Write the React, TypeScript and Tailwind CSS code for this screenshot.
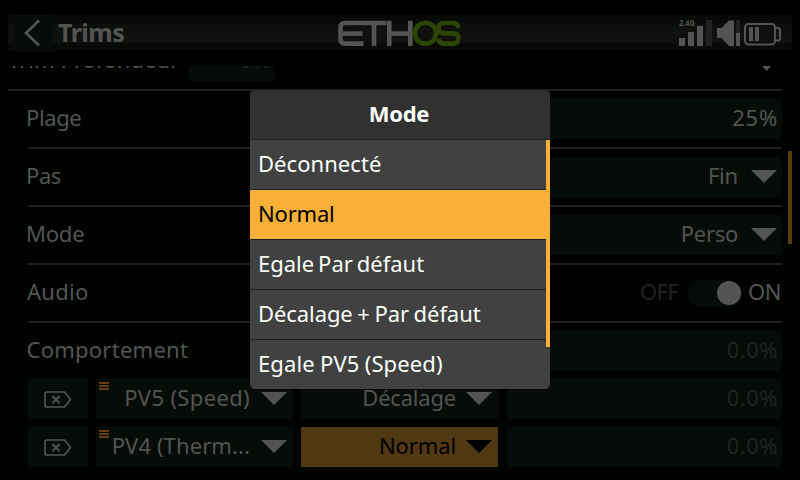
import React from "react";

const Caret = ({ dark = false }: { dark?: boolean }) => (
  <svg className={"-mt-px block " + (dark ? "text-black" : "text-[#525552]")} width="26" height="13" viewBox="0 0 26 13">
    <path d="M0 0H26L13 13Z" fill="currentColor" />
  </svg>
);

const BackIcon = () => (
  <svg width="38" height="38" viewBox="0 0 38 38" fill="none">
    <path d="M25 6.5L12 19L25 31.5" stroke="#525552" strokeWidth="2.6" />
  </svg>
);

const Logo = () => (
  <svg width="124" height="28" viewBox="338 19 124 28" fill="none">
    <g stroke="#535553" strokeWidth="4.6">
      <path d="M386.5 23H345Q340.500 23 340.500 27.500V39Q340.500 43.600 345 43.600H363.500" />
      <path d="M340 33.600H362.500" />
      <path d="M374 23V46" />
      <path d="M389.300 20.700V46" />
      <path d="M410.300 20.700V46" />
      <path d="M389 33.600H410" />
    </g>
    <g stroke="#2c4500" strokeWidth="4.600">
      <rect x="415.200" y="23" width="20.600" height="20.600" rx="9.500" />
      <path d="M458.300 28Q457.800 23 453 23H443.500Q438.600 23 438.600 28.300Q438.600 33.400 443.500 33.400H453Q458.300 33.400 458.300 38.500Q458.300 43.600 453 43.600H443.500Q439 43.600 438.600 38.500" />
    </g>
  </svg>
);

const StatusIcons = () => (
  <svg className="mt-[2px]" width="104" height="32" viewBox="678 18 104 32">
    <g fill="#525552">
      <text x="679" y="26.300" fontSize="8" fontWeight="700" fontFamily="Noto Sans, sans-serif" textLength="16" lengthAdjust="spacingAndGlyphs">2.4G</text>
      <rect x="679" y="38" width="6" height="8" />
      <rect x="688" y="32" width="6" height="14" />
      <rect x="697" y="26" width="6" height="20" />
      <path d="M717 28H721.500L729 20.500H734V46H729L721.500 38H717Z" />
      <rect x="736" y="33" width="4" height="13" />
      <rect x="749" y="27" width="4" height="14" />
      <rect x="755" y="27" width="4" height="14" />
    </g>
    <g fill="#1f221f">
      <rect x="706" y="20" width="6" height="26" />
      <rect x="736" y="20" width="4" height="13" />
    </g>
    <g fill="none" stroke="#525552" strokeWidth="2">
      <rect x="745" y="24" width="30" height="20.500" rx="3.500" />
      <path d="M775 28H778Q780 28 780 30V38.500Q780 40.500 778 40.500H775" />
    </g>
  </svg>
);

const DeleteTag = () => (
  <svg width="28" height="17" viewBox="0 0 28 17" fill="none" stroke="#525552">
    <path d="M3 1H20.500L26.500 8.500L20.500 16H3Q1 16 1 14V3Q1 1 3 1Z" strokeWidth="1.700" />
    <path d="M8.500 5L15.500 12M15.500 5L8.500 12" strokeWidth="1.900" />
  </svg>
);

const MenuMark = () => (
  <div className="absolute left-[3px] top-[3px] flex flex-col gap-px">
    <div className="h-[2px] w-[10px] bg-[#603f0c]" />
    <div className="h-[2px] w-[10px] bg-[#603f0c]" />
    <div className="h-[2px] w-[10px] bg-[#603f0c]" />
  </div>
);

const Field = ({ className = "", children }: { className?: string; children?: React.ReactNode }) => (
  <div className={"relative flex h-10 items-center justify-end bg-[#080c08] " + className}>{children}</div>
);

const Label = ({ className = "", children }: { className?: string; children: React.ReactNode }) => (
  <span className={"block pb-[5px] " + className}>{children}</span>
);

const Row = ({ label, tracking = "", last = false, children }: { label: string; tracking?: string; last?: boolean; children: React.ReactNode }) => (
  <div className={"ml-[28px] flex items-center justify-between border-[#1d201d] " + (last ? "h-[56px]" : "h-[58px] border-b-2")}>
    <Label className={"-ml-[2px] " + tracking}>{label}</Label>
    {children}
  </div>
);

const Assignment = ({ source, sourceTracking, mode, modeTracking, active = false }: { source: string; sourceTracking: string; mode: string; modeTracking: string; active?: boolean }) => (
  <div className="ml-[28px] flex gap-2">
    <div className="flex h-10 w-[60px] items-center justify-center bg-[#080c08]"><DeleteTag /></div>
    <Field className="w-[197px] gap-[11px] pr-[6px]">
      <MenuMark />
      <Label className={sourceTracking}>{source}</Label>
      <Caret />
    </Field>
    <Field className={"w-[197px] gap-[10px] pr-[6px] " + (active ? "!bg-[#503812] text-black" : "")}>
      <Label className={modeTracking}>{mode}</Label>
      <Caret dark={active} />
    </Field>
    <Field className="flex-1 pr-[4px] text-[#202320]"><Label className="tracking-[0.5px]">0.0%</Label></Field>
  </div>
);

const options = [
  { label: "Déconnecté", style: "tracking-[0.05px]" },
  { label: "Normal", style: "tracking-[-0.2px]" },
  { label: "Egale Par défaut", style: "tracking-[0px] [word-spacing:-1.800px]" },
  { label: "Décalage + Par défaut", style: "tracking-[-0.08px] [word-spacing:-1px]" },
  { label: "Egale PV5 (Speed)", style: "tracking-[0.1px] [word-spacing:-0.5px]" },
];

const ModeDialog = () => (
  <div className="absolute left-[250px] top-[90px] h-[299px] w-[300px] overflow-hidden rounded-[5px] bg-[#414141] text-[#fafffa]">
    <div className="flex h-[50px] items-center justify-center border-b border-[#202020] bg-[#313131] font-bold"><span className="-ml-[2px] pb-[3px] tracking-[-0.3px]">Mode</span></div>
    {options.map((o, i) => (
      <div
        key={o.label}
        className={"mr-1 flex h-[50px] items-center border-b pl-[8px] " + (i === 4 ? "border-transparent " : "border-[#202020] ") + (i === 1 ? "bg-[#f8b038] text-black" : "")}
      >
        <span className={"block pb-[3px] " + o.style}>{o.label}</span>
      </div>
    ))}
    <div className="absolute right-0 top-[50px] h-[207px] w-1 bg-[#f8b038]" />
  </div>
);

export default function App() {
  return (
    <div className="relative flex h-[480px] w-[800px] flex-col overflow-hidden whitespace-nowrap bg-[#000300] font-['Noto_Sans',sans-serif] text-[22px] leading-[30px] text-[#525552]">
      <header className="h-[66px] shrink-0 px-2 pt-2">
        <div className="flex h-[50px] items-center bg-[linear-gradient(#000_0_7px,#070a07_7px_15px,#0d0f0d_15px_20px,#0f110f_20px_35px,#070a07_35px_43px,#000_43px)] pl-[6px] pr-[10px]">
          <div className="flex w-[324px] items-center">
            <div className="bg-[#080c08]"><BackIcon /></div>
            <span className="-mt-[2px] ml-[6px] text-[25px] font-bold tracking-[-0.5px]">Trims</span>
          </div>
          <Logo />
          <div className="flex flex-1 justify-end"><StatusIcons /></div>
        </div>
      </header>
      <main className="relative flex-1 overflow-hidden">
        <div className="flex h-full w-[782px] flex-col">
          <div className="ml-2 flex h-[25px] shrink-0 items-end justify-between overflow-hidden border-b-2 border-[#1d201d]">
            <div className="flex h-[56px] w-full items-center">
              <Label className="w-[181px] tracking-[0.05px]">Trim Profondeur</Label>
              <Field className="w-[85px] pr-[3px] text-[#202320]"><Label className="tracking-[0.5px]">0%</Label></Field>
              <svg className="ml-auto mr-[11px] mt-[14px]" width="9" height="5" viewBox="0 0 9 5"><path d="M0 0H9L4.500 5Z" fill="#525552" /></svg>
            </div>
          </div>
          <Row label="Plage" tracking="tracking-[-0.4px]"><Field className="w-[480px] pr-[4px]"><Label className="tracking-[0.8px]">25%</Label></Field></Row>
          <Row label="Pas" tracking="tracking-[-0.4px]"><Field className="w-[480px] gap-[13px] pr-[5px]"><Label className="tracking-[-0.2px]">Fin</Label><Caret /></Field></Row>
          <Row label="Mode" tracking="tracking-[-0.2px]"><Field className="w-[480px] gap-[13px] pr-[5px]"><Label className="tracking-[-0.3px]">Perso</Label><Caret /></Field></Row>
          <Row label="Audio" tracking="pl-px tracking-[0.3px]">
            <div className="flex items-center">
              <Label className="tracking-[-0.6px] text-[#202320]">OFF</Label>
              <div className="ml-[10px] mr-[6px] flex h-[27px] w-[54px] items-center justify-end rounded-full bg-[#080c08] pr-px"><div className="h-6 w-6 rounded-full bg-[#525552]" /></div>
              <Label className="mr-px tracking-[-0.5px]">ON</Label>
            </div>
          </Row>
          <Row label="Comportement" tracking="pl-[0.5px] tracking-[0.25px]" last><Field className="w-[480px] pr-[4px] text-[#202320]"><Label className="tracking-[0.5px]">0.0%</Label></Field></Row>
          <div className="flex flex-col gap-2">
            <Assignment source="PV5 (Speed)" sourceTracking="tracking-[0.35px]" mode="Décalage" modeTracking="tracking-[-0.2px]" />
            <Assignment source="PV4 (Therm..." sourceTracking="tracking-[0.1px]" mode="Normal" modeTracking="tracking-[-0.1px]" active />
          </div>
        </div>
        <div className="absolute left-[788px] top-[85px] h-[93px] w-1 bg-[#583c10]" />
      </main>
      <ModeDialog />
    </div>
  );
}
